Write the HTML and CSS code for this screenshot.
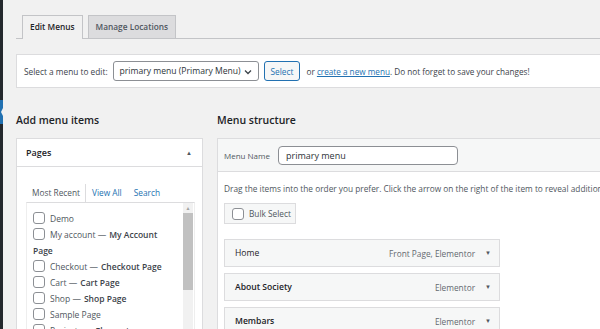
FILE: index.html
```html
<!DOCTYPE html>
<html>
<head>
<meta charset="utf-8">
<link rel="stylesheet" href="styles.css">
</head>
<body>
<div class="adminbar"><span class="current"></span><span class="notch"></span></div>
<div class="main">
  <div class="tabs">
    <div class="tab active">Edit Menus</div>
    <div class="tab">Manage Locations</div>
  </div>
  <div class="selectbar">
    <span class="label">Select a menu to edit:</span>
    <div class="select">primary menu (Primary Menu)<svg class="chev" width="8" height="6" viewBox="0 0 8 6"><path d="M1 1.5 L4 4.5 L7 1.5" fill="none" stroke="#3c434a" stroke-width="1.3"/></svg></div>
    <div class="btn">Select</div>
    <span class="note">or <a class="link">create a new menu</a>. Do not forget to save your changes!</span>
  </div>
  <div class="cols">
    <div class="left">
      <h2>Add menu items</h2>
      <div class="box">
        <div class="box-head"><span>Pages</span><span class="up">&#9650;</span></div>
        <div class="box-body">
          <div class="itabs">
            <span class="itab active">Most Recent</span>
            <span class="itab link">View All</span>
            <span class="itab link">Search</span>
          </div>
          <div class="list">
            <div class="items">
              <div class="item"><span class="cb"></span>Demo</div>
              <div class="item"><span class="cb"></span>My account — <b>My Account</b></div>
              <div class="item wrap"><b>Page</b></div>
              <div class="item"><span class="cb"></span>Checkout — <b>Checkout Page</b></div>
              <div class="item"><span class="cb"></span>Cart — <b>Cart Page</b></div>
              <div class="item"><span class="cb"></span>Shop — <b>Shop Page</b></div>
              <div class="item"><span class="cb"></span>Sample Page</div>
              <div class="item"><span class="cb"></span>Projects — <b>Elementor</b></div>
            </div>
            <div class="scroll">
              <span class="sarrow">&#9650;</span>
              <div class="thumb"></div>
              <span class="sarrow down">&#9660;</span>
            </div>
          </div>
        </div>
      </div>
    </div>
    <div class="right">
      <h2>Menu structure</h2>
      <div class="box wide">
        <div class="mhead">
          <span class="mlabel">Menu Name</span>
          <div class="input">primary menu</div>
        </div>
        <div class="mbody">
          <p class="drag">Drag the items into the order you prefer. Click the arrow on the right of the item to reveal additional configuration options.</p>
          <div class="bulk"><span class="cb"></span>Bulk Select</div>
          <div class="mitems">
            <div class="mitem"><span class="mt normal">Home</span><span class="mm">Front Page, Elementor</span><span class="dn">&#9660;</span></div>
            <div class="mitem"><span class="mt">About Society</span><span class="mm">Elementor</span><span class="dn">&#9660;</span></div>
            <div class="mitem"><span class="mt">Membars</span><span class="mm">Elementor</span><span class="dn">&#9660;</span></div>
          </div>
        </div>
      </div>
    </div>
  </div>
</div>
</body>
</html>
```
FILE: styles.css
```css
html, body { margin: 0; padding: 0; }
body {
  background: #f1f1f1;
  font-family: "Open Sans", "Noto Sans", sans-serif;
  color: #3c434a;
  display: flex;
  width: 600px;
  height: 329px;
  overflow: hidden;
  font-size: 9px;
}
.adminbar {
  width: 3px;
  flex: none;
  background: #23282d;
  position: relative;
}
.adminbar .current {
  position: absolute;
  left: 0; top: 100px;
  width: 3px; height: 24px;
  background: #2271b1;
}
.adminbar .notch {
  position: absolute;
  right: 0; top: 108px;
  width: 0; height: 0;
  border-top: 4px solid transparent;
  border-bottom: 4px solid transparent;
  border-right: 2px solid #f1f1f1;
}
.main {
  flex: none;
  width: 800px;
  padding-left: 13px;
}
.tabs {
  display: flex;
  margin-top: 15px;
  padding-left: 6px;
  gap: 5px;
  border-bottom: 1px solid #c3c4c7;
  height: 23px;
}
.tab {
  height: 22px;
  line-height: 22px;
  padding: 0 7px;
  border: 1px solid #c3c4c7;
  border-bottom: none;
  background: #dcdcde;
  font-size: 8.3px;
  font-weight: 600;
  color: #50575e;
}
.tab.active {
  background: #f1f1f1;
  height: 23px;
  color: #1d2327;
}
.selectbar {
  margin-top: 15px;
  height: 32px;
  background: #fff;
  border: 1px solid #dcdcde;
  display: flex;
  align-items: center;
  padding-left: 7px;
}
.label { font-size: 8.3px; color: #3c434a; margin-right: 5px; }
.select {
  height: 20px;
  width: 146px;
  box-sizing: border-box;
  border: 1px solid #8c8f94;
  border-radius: 3px;
  display: flex;
  align-items: center;
  padding-left: 6px;
  font-size: 8.6px;
  color: #2c3338;
  position: relative;
  white-space: nowrap;
}
.chev { position: absolute; right: 6px; top: 7px; }
.btn {
  margin-left: 5px;
  height: 20px;
  box-sizing: border-box;
  padding: 0 6px;
  border: 1px solid #2271b1;
  border-radius: 3px;
  background: #f6f7f7;
  color: #2271b1;
  font-size: 8.3px;
  display: flex;
  align-items: center;
}
.note { margin-left: 6px; font-size: 8.2px; color: #3c434a; }
.link { color: #2271b1; text-decoration: underline; }
.cols { display: flex; gap: 14px; }
h2 {
  margin: 0;
  font-size: 10.5px;
  font-weight: 600;
  color: #1d2327;
  line-height: 18px;
  padding-top: 23px;
  box-sizing: border-box;
  height: 50px;
}
.left { width: 187px; flex: none; }
.right { flex: 1; }
.box {
  background: #fff;
  border: 1px solid #dcdcde;
  height: 300px;
  box-sizing: border-box;
}
.box-head {
  height: 27px;
  border-bottom: 1px solid #dcdcde;
  display: flex;
  align-items: center;
  justify-content: space-between;
  padding: 0 10px 0 9px;
  font-size: 9px;
  font-weight: 600;
  color: #1d2327;
}
.up { font-size: 6px; color: #50575e; }
.box-body { padding: 17px 7px 0 9px; }
.itabs { display: flex; height: 18px; align-items: center; }
.itab { font-size: 8.3px; padding: 0 6px; height: 18px; line-height: 18px; }
.itab.active { color: #50575e; border-right: 1px solid #dcdcde; padding-right: 5px; }
.itab.link { text-decoration: none; }
.list {
  border: 1px solid #eee;
  border-top: 1px solid #dcdcde;
  display: flex;
  height: 140px;
  width: 169px;
  box-sizing: border-box;
}
.items { flex: 1; padding: 7px 0 0 6px; }
.item {
  height: 16px;
  display: flex;
  align-items: center;
  font-size: 8.5px;
  color: #50575e;
  white-space: nowrap;
}
.item b { font-weight: 600; color: #3c434a; margin-left: 3px; }
.item.wrap b { margin-left: 0; }
.cb {
  width: 10px; height: 10px;
  border: 1px solid #8c8f94;
  border-radius: 3px;
  margin-right: 5px;
  flex: none;
  background: #fff;
}
.scroll {
  width: 10px;
  flex: none;
  margin-right: 1px;
  background: #f1f1f1;
  display: flex;
  flex-direction: column;
  align-items: center;
}
.sarrow { font-size: 5px; color: #a3a3a3; height: 10px; line-height: 10px; }
.thumb { width: 10px; height: 77px; background: #c1c1c1; }
.sarrow.down { margin-top: auto; color: #505050; }
.mhead {
  height: 32px;
  background: #f6f7f7;
  border-bottom: 1px solid #dcdcde;
  display: flex;
  align-items: center;
  padding-left: 6px;
}
.mlabel { font-size: 8px; color: #50575e; margin-right: 8px; }
.input {
  width: 180px;
  height: 19px;
  box-sizing: border-box;
  border: 1px solid #8c8f94;
  border-radius: 4px;
  background: #fff;
  font-size: 9px;
  color: #2c3338;
  display: flex;
  align-items: center;
  padding-left: 7px;
}
.mbody { padding: 10px 6px 0 6px; }
.drag {
  margin: 0;
  font-size: 8.3px;
  color: #50575e;
  white-space: nowrap;
  height: 14px;
  line-height: 14px;
}
.bulk {
  margin-top: 7px;
  width: 72px;
  height: 21px;
  box-sizing: border-box;
  border: 1px solid #dcdcde;
  background: #f6f7f7;
  display: flex;
  align-items: center;
  padding-left: 7px;
  font-size: 8.3px;
  color: #50575e;
}
.bulk .cb { margin-right: 5px; }
.mitems { margin-top: 15px; display: flex; flex-direction: column; gap: 6px; }
.mitem {
  width: 276px;
  height: 28px;
  box-sizing: border-box;
  border: 1px solid #dcdcde;
  background: #f6f7f7;
  display: flex;
  align-items: center;
  padding: 0 8px 0 10px;
}
.mt { font-size: 8.6px; font-weight: 600; color: #1d2327; }
.mt.normal { font-weight: 500; }
.mm { margin-left: auto; font-size: 8.3px; color: #646970; }
.dn { margin-left: 10px; font-size: 6px; color: #50575e; }
```
